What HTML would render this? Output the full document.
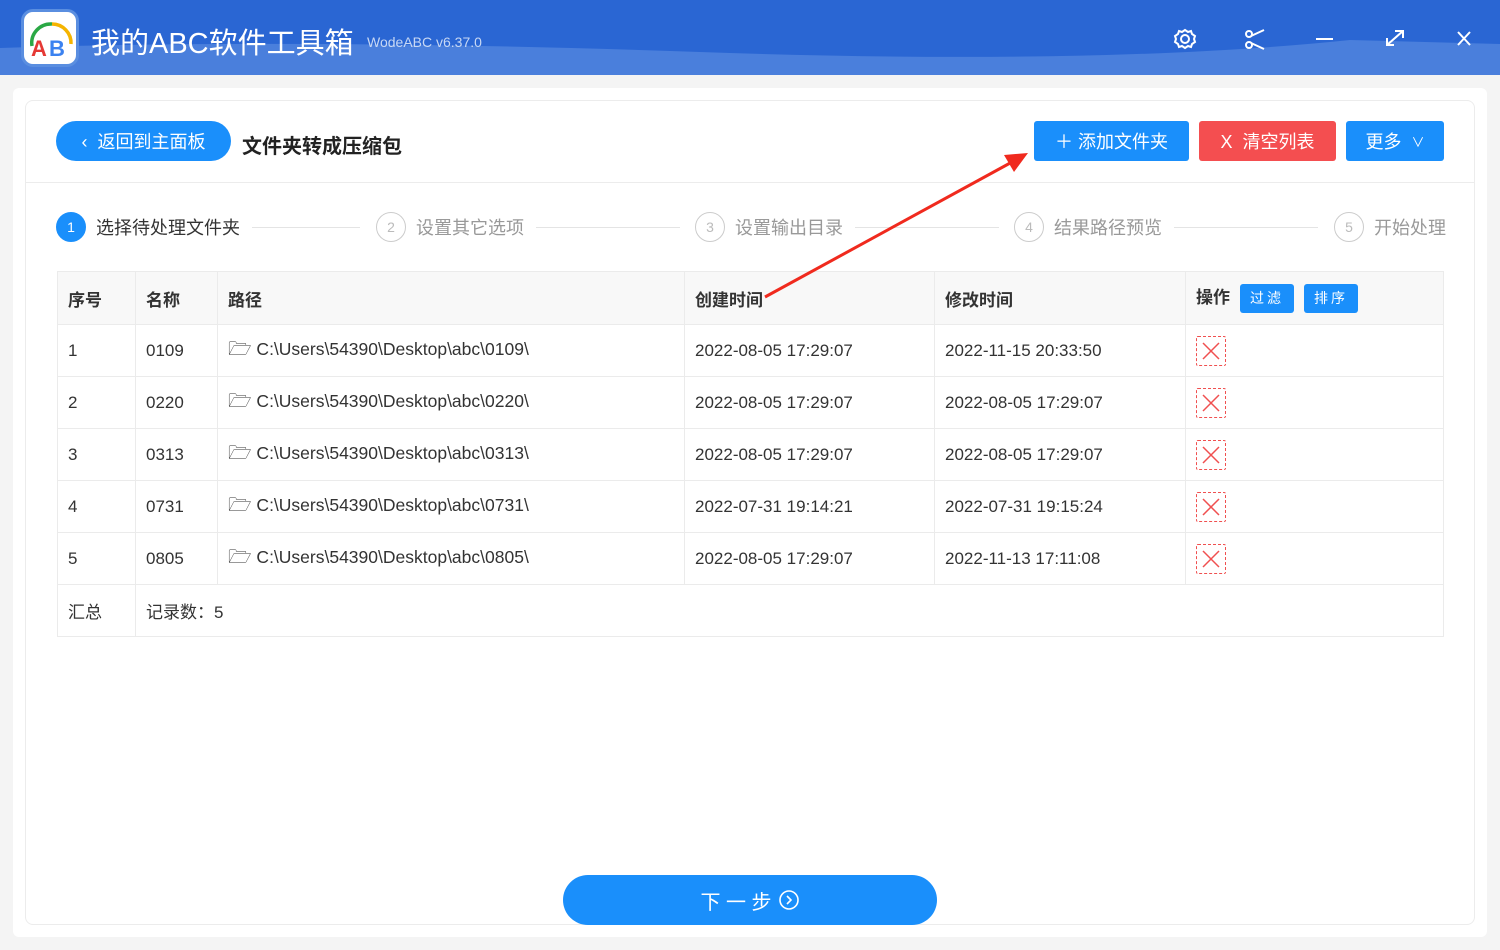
<!DOCTYPE html>
<html><head><meta charset="utf-8"><style>
*{margin:0;padding:0;box-sizing:border-box}
body{width:1500px;height:950px;overflow:hidden;background:#f4f4f4;font-family:"Liberation Sans","Noto Sans CJK SC",sans-serif;position:relative;color:#333}
.title{position:absolute;left:0;top:0;width:1500px;height:75px;background:#2a66d3;overflow:hidden}
.abs{position:absolute}
.card{position:absolute;left:13px;top:88px;width:1474px;height:849px;background:#fff;border-radius:6px}
.inner{position:absolute;left:25px;top:100px;width:1450px;height:825px;border:1px solid #ececec;border-radius:8px}
.btn{position:absolute;color:#fff;font-size:18px;display:flex;align-items:center;justify-content:center;border-radius:3px}
.step{position:absolute;top:212px;display:flex;align-items:center;font-size:18px;color:#999}
.step .c{width:30px;height:30px;border-radius:50%;border:1px solid #ccc;color:#bbb;font-size:14px;display:flex;align-items:center;justify-content:center;margin-right:10px}
.line{position:absolute;top:227px;height:1px;background:#e4e4e4}
table{position:absolute;left:57px;top:271px;width:1387px;border-collapse:collapse;font-size:17px;color:#333}
td{border:1px solid #ebebeb;padding-left:10px;height:52px}
tr.h td{background:#f8f8f8;font-weight:bold;height:53px}
.x{display:inline-block;width:30px;height:30px;border:1px dashed #f05050;border-radius:2px;position:relative;vertical-align:middle}
.tag{display:inline-block;background:#1a8ffb;color:#fff;font-size:14px;font-weight:normal;padding:0 10px;height:29px;line-height:29px;border-radius:3px;margin-left:10px;letter-spacing:3px}
.p{font-size:17.5px}
</style></head><body>
<div class="title">
<svg class="abs" style="left:0;top:0" width="1500" height="75"><path d="M0 48 Q300 38 700 52 T1350 40 L1500 44 L1500 75 L0 75Z" fill="#4a7fdc"/></svg>
<div class="abs" style="left:21px;top:9px;width:58px;height:58px;border-radius:12px;background:#fff;border:3px solid #5a8ee0"></div>
<svg class="abs" style="left:24px;top:12px" width="54" height="54"><path d="M8 34 A19 19 0 0 1 28 12" stroke="#2aa845" stroke-width="3.5" fill="none"/><path d="M28 12 A19 19 0 0 1 47 32" stroke="#f5b400" stroke-width="3.5" fill="none"/><text x="7" y="44" font-size="22" font-weight="bold" fill="#e53935" font-family="Liberation Sans">A</text><text x="25" y="44" font-size="22" font-weight="bold" fill="#3b82f0" font-family="Liberation Sans">B</text></svg>
<div class="abs" style="left:91px;top:20px;font-size:29px;color:#fff">我的ABC软件工具箱</div>
<div class="abs" style="left:367px;top:34px;font-size:14px;color:#c8d8f4">WodeABC v6.37.0</div>
<svg class="abs" style="left:1170px;top:25px" width="310" height="28" fill="none" stroke="#fff" stroke-width="2">
<circle cx="15" cy="14" r="4"/><path d="M15 5 l3 2 3-1 1 3 3 2-1 3 1 3-3 2-1 3-3-1-3 2-3-2-3 1-1-3-3-2 1-3-1-3 3-2 1-3 3 1z"/>
<circle cx="79" cy="9" r="3"/><circle cx="79" cy="20" r="3"/><path d="M81 11 L94 5 M81 18 L94 24"/>
<path d="M146 14 H163"/>
<path d="M217 20 L233 6 M225 6 H233 V13 M217 13 V20 H224"/>
<path d="M288 7 L300 20 M300 7 L288 20"/>
</svg>
</div>
<div class="card"></div>
<div class="inner"></div>
<div class="abs" style="left:26px;top:182px;width:1448px;height:1px;background:#ececec"></div>
<div class="btn" style="left:56px;top:121px;width:175px;height:40px;border-radius:20px;background:#1a8ffb">‹&nbsp;&nbsp;返回到主面板</div>
<div class="abs" style="left:242px;top:130px;font-size:20px;font-weight:bold;color:#222">文件夹转成压缩包</div>
<div class="btn" style="left:1034px;top:121px;width:155px;height:40px;background:#1a8ffb">＋&nbsp;添加文件夹</div>
<div class="btn" style="left:1199px;top:121px;width:137px;height:40px;background:#f44e50">X&nbsp;&nbsp;清空列表</div>
<div class="btn" style="left:1346px;top:121px;width:98px;height:40px;background:#1a8ffb">更多&nbsp;&nbsp;<span style="font-size:13px">∨</span></div>
<div class="step" style="left:56px;color:#333"><div class="c" style="background:#1a8ffb;border-color:#1a8ffb;color:#fff">1</div>选择待处理文件夹</div>
<div class="line" style="left:252px;width:108px"></div>
<div class="step" style="left:376px"><div class="c">2</div>设置其它选项</div>
<div class="line" style="left:536px;width:144px"></div>
<div class="step" style="left:695px"><div class="c">3</div>设置输出目录</div>
<div class="line" style="left:855px;width:144px"></div>
<div class="step" style="left:1014px"><div class="c">4</div>结果路径预览</div>
<div class="line" style="left:1174px;width:144px"></div>
<div class="step" style="left:1334px"><div class="c">5</div>开始处理</div>
<table>
<colgroup><col style="width:78px"><col style="width:82px"><col style="width:467px"><col style="width:250px"><col style="width:251px"><col></colgroup>
<tr class="h"><td>序号</td><td>名称</td><td>路径</td><td>创建时间</td><td>修改时间</td><td>操作<span class="tag">过滤</span><span class="tag">排序</span></td></tr>
<tr><td>1</td><td>0109</td><td class="p"><span style="font-size:19px">🗁</span> C:\Users\54390\Desktop\abc\0109\</td><td>2022-08-05 17:29:07</td><td>2022-11-15 20:33:50</td><td><span class="x"></span></td></tr>
<tr><td>2</td><td>0220</td><td class="p"><span style="font-size:19px">🗁</span> C:\Users\54390\Desktop\abc\0220\</td><td>2022-08-05 17:29:07</td><td>2022-08-05 17:29:07</td><td><span class="x"></span></td></tr>
<tr><td>3</td><td>0313</td><td class="p"><span style="font-size:19px">🗁</span> C:\Users\54390\Desktop\abc\0313\</td><td>2022-08-05 17:29:07</td><td>2022-08-05 17:29:07</td><td><span class="x"></span></td></tr>
<tr><td>4</td><td>0731</td><td class="p"><span style="font-size:19px">🗁</span> C:\Users\54390\Desktop\abc\0731\</td><td>2022-07-31 19:14:21</td><td>2022-07-31 19:15:24</td><td><span class="x"></span></td></tr>
<tr><td>5</td><td>0805</td><td class="p"><span style="font-size:19px">🗁</span> C:\Users\54390\Desktop\abc\0805\</td><td>2022-08-05 17:29:07</td><td>2022-11-13 17:11:08</td><td><span class="x"></span></td></tr>
<tr><td style="height:49px">汇总</td><td colspan="5">记录数：5</td></tr>
</table>
<svg class="abs" style="left:0;top:0" width="1500" height="950">
<g stroke="#f05050" stroke-width="1.5">
<path d="M1203 343 l16 16 M1219 343 l-16 16"/><path d="M1203 395 l16 16 M1219 395 l-16 16"/><path d="M1203 447 l16 16 M1219 447 l-16 16"/><path d="M1203 499 l16 16 M1219 499 l-16 16"/><path d="M1203 551 l16 16 M1219 551 l-16 16"/>
</g>
<path d="M765 297 L1012 162" stroke="#f02a1e" stroke-width="3"/>
<path d="M1028 153 L1004 155 L1014 172Z" fill="#f02a1e"/>
</svg>
<div class="btn" style="left:563px;top:875px;width:374px;height:50px;border-radius:25px;background:#1a8ffb;font-size:20px">下 一 步 <svg width="22" height="22" style="margin-left:6px" fill="none" stroke="#fff" stroke-width="1.6"><circle cx="11" cy="11" r="9"/><path d="M9 7 l4 4 -4 4"/></svg></div>
</body></html>
